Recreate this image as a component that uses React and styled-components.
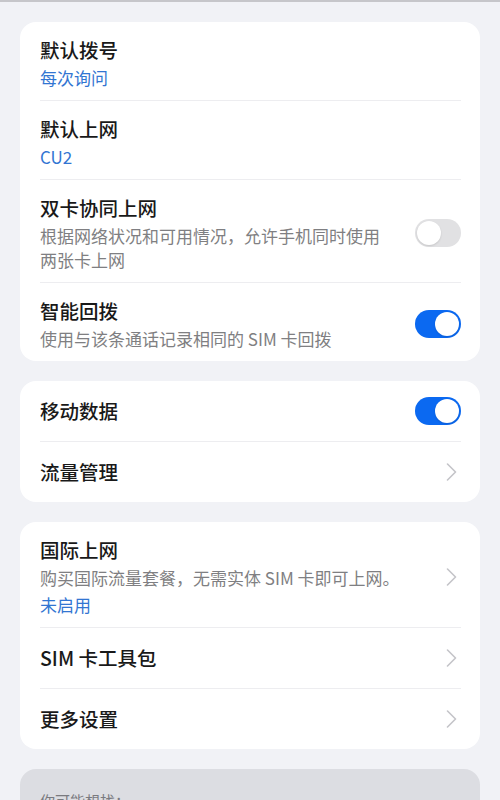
import React from 'react';
import styled, { createGlobalStyle } from 'styled-components';

const colors = {
  page: '#f1f2f6',
  card: '#ffffff',
  muted: '#dcdde2',
  title: '#191919',
  sub: '#7f7f82',
  link: '#3275d2',
  accent: '#0b69f1',
  line: '#ededf0',
  chevron: '#c4c4c8',
  trackOff: '#e1e1e3',
};

const GlobalStyle = createGlobalStyle`
  body {
    margin: 0;
    background: ${colors.page};
    font-family: "Noto Sans CJK SC", "Noto Sans", sans-serif;
    -webkit-font-smoothing: antialiased;
  }
`;

const Page = styled.div`
  display: flex;
  flex-direction: column;
  gap: 20px;
  padding: 20px 20px 0;
  border-top: 2px solid #c6c6ca;
  min-height: 800px;
  box-sizing: border-box;
`;

const Card = styled.section`
  background: ${colors.card};
  border-radius: 16px;
  padding: 0 19px 0 20px;
`;

const Row = styled.div`
  display: flex;
  align-items: center;
  gap: 24px;
  padding: ${(p) => (p.single ? '16px 0' : '14px 0 10px')};

  & + & {
    border-top: 1px solid ${colors.line};
  }
`;

const TextBlock = styled.div`
  flex: 1;
  min-width: 0;
`;

const Title = styled.div`
  font-size: 19.5px;
  line-height: 28px;
  font-weight: 500;
  color: ${colors.title};
`;

const Sub = styled.div`
  font-size: 17px;
  line-height: 24px;
  color: ${(p) => (p.link ? colors.link : colors.sub)};
  margin-top: ${(p) => (p.gap ? `${p.gap}px` : '2px')};
`;

const Track = styled.div`
  flex: none;
  width: 46px;
  height: 28px;
  border-radius: 14px;
  padding: 2px;
  box-sizing: border-box;
  display: flex;
  justify-content: ${(p) => (p.on ? 'flex-end' : 'flex-start')};
  background: ${(p) => (p.on ? colors.accent : colors.trackOff)};
`;

const Knob = styled.span`
  width: 24px;
  height: 24px;
  border-radius: 50%;
  background: #fff;
  box-shadow: 0 1px 2px rgba(0, 0, 0, 0.12);
`;

const Chevron = styled.svg`
  flex: none;
  width: 16px;
  height: 18px;
`;

const Hint = styled.section`
  background: ${colors.muted};
  border-radius: 16px;
  padding: 22px 20px 40px;
  min-height: 120px;
`;

const HintLabel = styled.div`
  font-size: 15px;
  line-height: 20px;
  color: #7a7a7f;
`;

const Switch = ({ on }) => (
  <Track on={on ? 1 : 0}>
    <Knob />
  </Track>
);

const Arrow = () => (
  <Chevron viewBox="0 0 16 18">
    <path d="M2.5 1 L10.5 9 L2.5 17" fill="none" stroke={colors.chevron} strokeWidth="1.6" strokeLinecap="round" strokeLinejoin="round" />
  </Chevron>
);

const App = () => (
  <>
    <GlobalStyle />
    <Page>
      <Card>
        <Row>
          <TextBlock>
            <Title>默认拨号</Title>
            <Sub link>每次询问</Sub>
          </TextBlock>
        </Row>
        <Row>
          <TextBlock>
            <Title>默认上网</Title>
            <Sub link>CU2</Sub>
          </TextBlock>
        </Row>
        <Row>
          <TextBlock>
            <Title>双卡协同上网</Title>
            <Sub>根据网络状况和可用情况，允许手机同时使用两张卡上网</Sub>
          </TextBlock>
          <Switch />
        </Row>
        <Row>
          <TextBlock>
            <Title>智能回拨</Title>
            <Sub>使用与该条通话记录相同的 SIM 卡回拨</Sub>
          </TextBlock>
          <Switch on />
        </Row>
      </Card>

      <Card>
        <Row single>
          <TextBlock>
            <Title>移动数据</Title>
          </TextBlock>
          <Switch on />
        </Row>
        <Row single>
          <TextBlock>
            <Title>流量管理</Title>
          </TextBlock>
          <Arrow />
        </Row>
      </Card>

      <Card>
        <Row>
          <TextBlock>
            <Title>国际上网</Title>
            <Sub>购买国际流量套餐，无需实体 SIM 卡即可上网。</Sub>
            <Sub link gap={3}>未启用</Sub>
          </TextBlock>
          <Arrow />
        </Row>
        <Row single>
          <TextBlock>
            <Title>SIM 卡工具包</Title>
          </TextBlock>
          <Arrow />
        </Row>
        <Row single>
          <TextBlock>
            <Title>更多设置</Title>
          </TextBlock>
          <Arrow />
        </Row>
      </Card>

      <Hint>
        <HintLabel>你可能想找：</HintLabel>
      </Hint>
    </Page>
  </>
);

export default App;
